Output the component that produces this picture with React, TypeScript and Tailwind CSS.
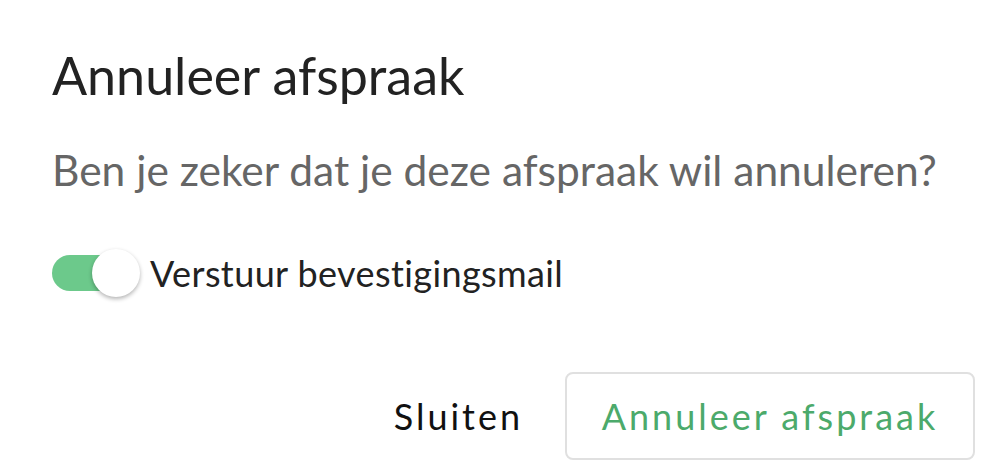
export default function App() {
  return (
    <div className="w-[992px] h-[476px] bg-white font-['Lato',sans-serif] overflow-hidden">
      <div className="pl-[52px] pr-[17px] pt-[44px]">
        <h1 className="text-[52px] leading-[62px] text-[#222222] font-normal">Annuleer afspraak</h1>
        <p className="mt-[38px] text-[42.5px] leading-[51px] text-[#666666]">Ben je zeker dat je deze afspraak wil annuleren?</p>
        <div className="mt-[54px] h-[48px] flex items-center gap-[8px]">
          <div className="relative w-[90px] h-[48px] flex items-center">
            <div className="w-[80px] h-[36px] rounded-full bg-[#6cc98b]" />
            <div className="absolute left-[40px] top-0 w-[48px] h-[48px] rounded-full bg-white shadow-[0_2px_4px_rgba(0,0,0,0.3)]" />
          </div>
          <span className="text-[36px] leading-[44px] tracking-[0.4px] text-[#222222]">Verstuur bevestigingsmail</span>
        </div>
        <div className="mt-[75px] flex items-center justify-end gap-[42px]">
          <button className="text-[36px] leading-[44px] tracking-[3px] text-[#111111]">Sluiten</button>
          <button className="w-[410px] h-[88px] rounded-[8px] border-2 border-[#e0e0e0] text-[36px] leading-[44px] tracking-[3px] text-[#4caa6b]">Annuleer afspraak</button>
        </div>
      </div>
    </div>
  );
}
